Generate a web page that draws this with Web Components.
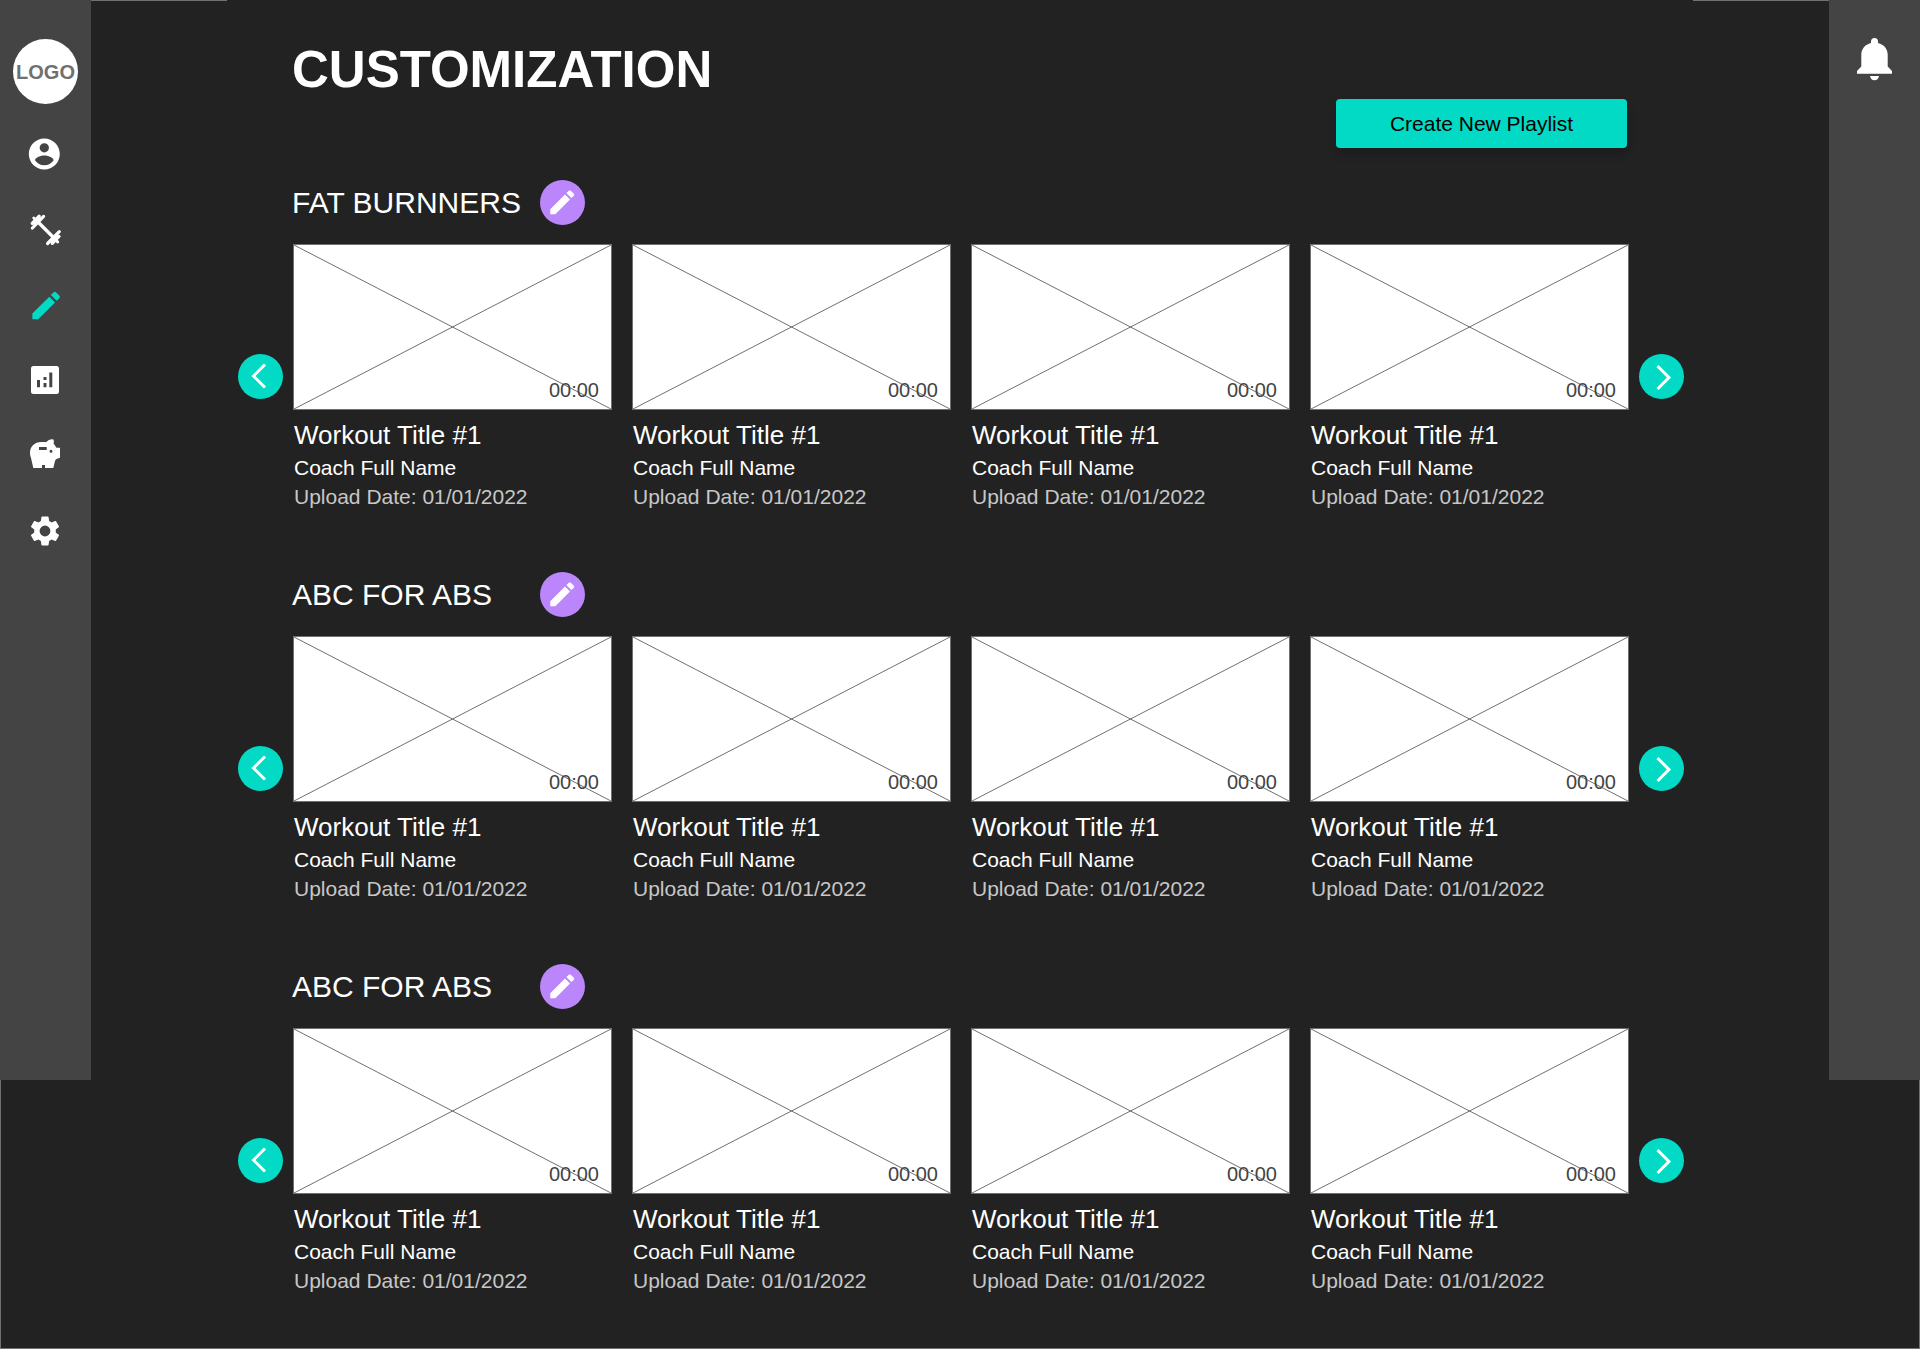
<!DOCTYPE html>
<html lang="en">
<head>
<meta charset="utf-8">
<meta name="viewport" content="width=device-width, initial-scale=1">
<title>Customization</title>
<style>
  html, body { margin: 0; background: #222; }
  body { font-family: "Liberation Sans", Arial, sans-serif; color: #fff; }
</style>
</head>
<body>
<customization-page></customization-page>

<script>
const base = `*, *::before { box-sizing: border-box; } svg { display: block; } button { font: inherit; border: 0; padding: 0; cursor: pointer; }`;
const pencil = `<path d="M3 17.25V21h3.75L17.81 9.94l-3.75-3.75L3 17.25zM20.71 7.04a1 1 0 0 0 0-1.41l-2.34-2.34a1 1 0 0 0-1.41 0l-1.83 1.83 3.75 3.75 1.83-1.83z"/>`;

const icons = {
  account: `<path transform="translate(-1.3 -.6) scale(1.55)" d="M12 2C6.48 2 2 6.48 2 12s4.48 10 10 10 10-4.48 10-10S17.52 2 12 2zm0 3a3 3 0 1 1 0 6 3 3 0 0 1 0-6zm0 14.2a7.2 7.2 0 0 1-6-3.22c.03-1.99 4-3.08 6-3.08 1.99 0 5.97 1.09 6 3.08a7.2 7.2 0 0 1-6 3.22z"/>`,
  dumbbell: `<g fill="none" stroke="currentColor" stroke-linecap="round"><path stroke-width="3.4" stroke-linecap="butt" d="M10 10L27 27"/><path stroke-width="3.2" d="M5.4 17L16.6 5.400M5.200 12.300L12.200 5.200M20.600 32.500L32.300 20.700M25.300 32.300L32 25.500"/><path stroke-width="4" stroke-linecap="butt" d="M6.500 13.500L13.500 6.500M24 31.200L31 24.200"/><path stroke-width="3" d="M6.800 7L10 10M28 28L30.700 31"/></g>`,
  edit: `<g transform="translate(.8 1.2) scale(1.53)">${pencil}</g>`,
  analytics: `<path transform="translate(-.5 0)" fill-rule="evenodd" d="M7 5h23a2.5 2.5 0 0 1 2.500 2.500v23a2.500 2.500 0 0 1-2.500 2.500H7a2.500 2.500 0 0 1-2.500-2.500v-23A2.500 2.500 0 0 1 7 5zM10.500 19v7.300h3V19zM17 16v3h3v-3zM17 22v4.300h3V22zM22.800 11.600v14.700h3V11.600z"/>`,
  savings: `<path fill-rule="evenodd" d="M3 17C3 10 8 6 14 6h5.500C20.500 4.500 23.500 3 26 3.300c1 .7 1 2.700.6 4.200l2.900 4.200H33v10L29.500 23c-1 .8-1.500 1.500-2 4l-1.200 5H18v-3h-3v3H6.300L4 22c-.7-2-1-3.500-1-5zM12 11v3h7.700v-3zM24 13.800a1.500 1.500 0 1 0 0 3 1.500 1.500 0 0 0 0-3z"/>`,
  settings: `<path transform="translate(0 2) scale(1.5)" d="M19.140 12.940c.04-.3.060-.61.060-.94 0-.32-.02-.64-.07-.94l2.030-1.580c.18-.14.230-.41.120-.61l-1.920-3.320c-.12-.22-.37-.29-.59-.22l-2.390.96c-.5-.38-1.030-.7-1.620-.94l-.36-2.540c-.04-.24-.24-.41-.48-.41h-3.840c-.24 0-.43.170-.47.410l-.36 2.540c-.59.240-1.130.570-1.620.940l-2.390-.96c-.22-.08-.47 0-.59.220L2.740 8.870c-.12.210-.08.470.120.610l2.030 1.580c-.05.3-.09.630-.09.940s.02.640.070.940l-2.030 1.580c-.18.140-.23.410-.12.610l1.920 3.320c.12.220.370.290.590.220l2.390-.96c.5.380 1.030.7 1.620.940l.36 2.540c.05.240.240.410.480.410h3.840c.24 0 .44-.17.470-.41l.36-2.540c.59-.24 1.130-.56 1.620-.94l2.390.96c.22.080.470 0 .59-.22l1.920-3.320c.12-.22.070-.47-.12-.61l-2.010-1.580zM12 15.600A3.600 3.600 0 1 1 12 8.400a3.600 3.600 0 0 1 0 7.200z"/>`
};

class Base extends HTMLElement {
  connectedCallback() {
    if (this.shadowRoot) return;
    const root = this.attachShadow({ mode: 'open' });
    root.innerHTML = `<style>${base}${this.css()}</style>${this.html()}`;
  }
}

customElements.define('nav-icon', class extends Base {
  css() { return `
    :host { display: block; }
    a { display: block; color: #fff; }
    :host([active]) a { color: #03dac5; }
    svg { fill: currentColor; }`; }
  html() { return `<a href="#" aria-label="${this.getAttribute('label')}"><svg width="37" height="37" viewBox="0 0 37 37">${icons[this.getAttribute('icon')]}</svg></a>`; }
});

customElements.define('side-rail', class extends Base {
  css() { return `
    :host { display: block; position: relative; width: 91px; height: 1080px; background: #444; }
    nav { display: flex; flex-direction: column; align-items: center; gap: 38px; padding-top: 39px; }
    .logo { display: grid; place-items: center; width: 65px; height: 65px; margin-bottom: -6px; border-radius: 50%; background: #fff; color: #707070; font-size: 20px; font-weight: 700; line-height: 24px; text-decoration: none; }`; }
  html() { return `<nav aria-label="Main">
    <a class="logo" href="#">LOGO</a>
    <nav-icon icon="account" label="Profile"></nav-icon>
    <nav-icon icon="dumbbell" label="Workouts"></nav-icon>
    <nav-icon icon="edit" label="Customization" active></nav-icon>
    <nav-icon icon="analytics" label="Statistics"></nav-icon>
    <nav-icon icon="savings" label="Savings"></nav-icon>
    <nav-icon icon="settings" label="Settings"></nav-icon>
  </nav>`; }
});

customElements.define('notice-rail', class extends Base {
  css() { return `
    :host { display: flex; justify-content: center; align-items: flex-start; position: relative; width: 91px; height: 1080px; padding-top: 38px; background: #444; box-sizing: border-box; }
    button { background: none; color: #fff; }`; }
  html() { return `<button aria-label="Notifications"><svg width="37" height="43" viewBox="0 0 37 43" fill="currentColor"><path d="M15 5V3.500a3.500 3.500 0 0 1 7 0V5c6 1.500 9.700 6 9.700 12v11.500L36 33v2.700H1V33l4.300-4.500V17C5.300 11 9 6.500 15 5zM14 38h9c-.5 2.800-2 4.300-4.500 4.300S14.500 40.800 14 38z"/></svg></button>`; }
});

customElements.define('round-button', class extends Base {
  css() { return `
    :host { display: block; width: 45px; height: 45px; }
    button { display: block; width: 45px; height: 45px; border-radius: 50%; background: #03dac5; color: #fff; }
    :host([kind="edit"]) button { background: #bb86fc; }`; }
  html() {
    const art = {
      edit: `<g fill="currentColor" transform="translate(6.3 6.300) scale(1.330)">${pencil}</g>`,
      previous: `<path d="M27 10.500L15.500 22 27 33.500" fill="none" stroke="currentColor" stroke-width="3"/>`,
      next: `<path d="M18.500 12L30 23.500 18.500 35" fill="none" stroke="currentColor" stroke-width="3"/>`
    };
    return `<button aria-label="${this.getAttribute('label')}"><svg width="45" height="45" viewBox="0 0 45 45">${art[this.getAttribute('kind')]}</svg></button>`;
  }
});

customElements.define('workout-card', class extends Base {
  css() { return `
    :host { display: block; min-width: 0; }
    .thumb { display: grid; height: 166px; border: 1px solid #707070; background: #fff; }
    .thumb > * { grid-area: 1 / 1; }
    svg { width: 100%; height: 164px; }
    time { align-self: end; justify-self: end; padding: 0 12px 7px 0; color: #444; font-size: 20px; line-height: 24px; }
    h3, p { margin: 0; padding-left: 1px; font-weight: 400; white-space: nowrap; }
    h3 { padding-top: 9px; font-size: 26px; line-height: 32px; }
    p { font-size: 21px; line-height: 29px; }
    .coach { padding-top: 2px; }
    .date { color: #c7c7c7; }`; }
  html() { return `<article>
    <div class="thumb">
      <svg viewBox="0 0 100 100" preserveAspectRatio="none" stroke="#707070" aria-hidden="true"><path vector-effect="non-scaling-stroke" d="M0 0L100 100M100 0L0 100"/></svg>
      <time><slot name="time"></slot></time>
    </div>
    <h3><slot></slot></h3>
    <p class="coach"><slot name="coach"></slot></p>
    <p class="date"><slot name="date"></slot></p>
  </article>`; }
});

customElements.define('playlist-row', class extends Base {
  css() { return `
    :host { display: block; }
    header { display: flex; align-items: center; padding-left: 54px; margin-bottom: 19px; }
    h2 { margin: 0; min-width: 248px; font-size: 30px; font-weight: 400; line-height: 36px; }
    .track { display: flex; align-items: center; gap: 10px; }
    .cards { flex: 1; min-width: 0; height: 265px; display: grid; grid-template-columns: repeat(4, minmax(0, 1fr)); gap: 20px; }`; }
  html() {
    const card = `<workout-card>Workout Title #1<span slot="time">00:00</span><span slot="coach">Coach Full Name</span><span slot="date">Upload Date: 01/01/2022</span></workout-card>`;
    return `<section>
    <header><h2><slot></slot></h2><round-button kind="edit" label="Edit playlist"></round-button></header>
    <div class="track">
      <round-button kind="previous" label="Previous workouts"></round-button>
      <div class="cards">${card.repeat(4)}</div>
      <round-button kind="next" label="Next workouts"></round-button>
    </div></section>`;
  }
});

customElements.define('create-button', class extends Base {
  css() { return `
    :host { display: block; }
    button { width: 291px; height: 49px; border-radius: 4px; background: #03dac5; color: #000; font-size: 21px; line-height: 24px; box-shadow: 0 6px 10px rgba(0, 0, 0, .2); }`; }
  html() { return `<button><slot></slot></button>`; }
});

customElements.define('customization-page', class extends Base {
  css() { return `
    :host { display: flex; align-items: flex-start; position: relative; min-height: 100vh; background: #222; box-sizing: border-box; }
    :host::before { content: ""; position: absolute; inset: 0; border: 1px solid #707070; box-sizing: border-box; pointer-events: none; }
    main { position: relative; flex: 1; min-width: 0; margin: 0 136px; padding: 40px 9px 50px 11px; background: #222; }
    .top { display: flex; justify-content: space-between; align-items: flex-start; padding: 0 57px 0 54px; margin-bottom: 32px; }
    h1 { margin: 0; font-size: 51px; font-weight: 700; line-height: 60px; }
    create-button { padding-top: 59px; }
    .lists { display: flex; flex-direction: column; gap: 63px; }`; }
  html() { return `<side-rail></side-rail>
  <main>
    <div class="top"><h1>CUSTOMIZATION</h1><create-button>Create New Playlist</create-button></div>
    <div class="lists">
      <playlist-row>FAT BURNNERS</playlist-row>
      <playlist-row>ABC FOR ABS</playlist-row>
      <playlist-row>ABC FOR ABS</playlist-row>
    </div>
  </main>
  <notice-rail></notice-rail>`; }
});
</script>
</body>
</html>
